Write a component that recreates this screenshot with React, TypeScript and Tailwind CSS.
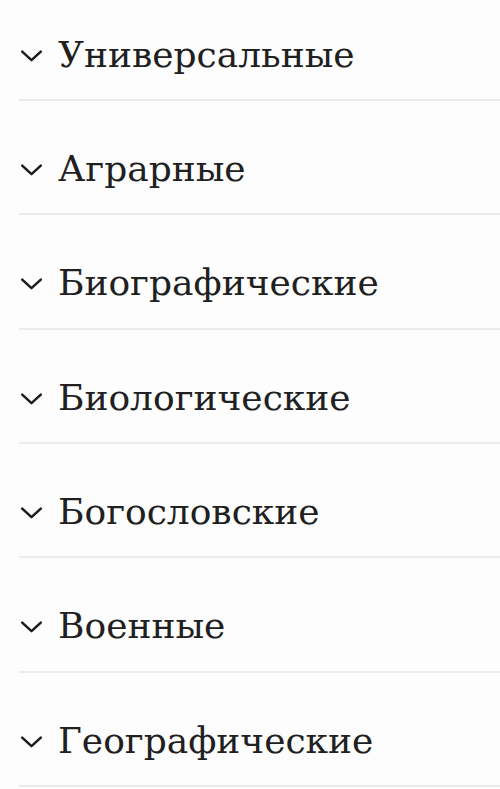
const items = [
  "Универсальные",
  "Аграрные",
  "Биографические",
  "Биологические",
  "Богословские",
  "Военные",
  "Географические",
];

function Chevron() {
  return (
    <svg width="24" height="14" viewBox="0 0 24 14" fill="none" className="shrink-0">
      <path d="M2.2 2.6 L11.5 11.2 L20.8 2.6" stroke="#1c1c1c" strokeWidth="2.5" strokeLinecap="round" strokeLinejoin="round" />
    </svg>
  );
}

export default function App() {
  return (
    <div className="w-[500px] h-[789px] overflow-hidden bg-[#fdfdfd]">
      <div className="mt-[-13.33px] pl-[19px]">
        {items.map((name) => (
          <div
            key={name}
            className="h-[114.33px] pt-[24px] flex items-center border-b-2 border-[#ececec]"
          >
            <div className="w-[39px] pl-[1px] pt-[2px] flex items-center">
              <Chevron />
            </div>
            <span
              className="text-[#202020] text-[36px] leading-none"
              style={{ fontFamily: '"DejaVu Serif", "Liberation Serif", serif' }}
            >
              {name}
            </span>
          </div>
        ))}
      </div>
    </div>
  );
}
